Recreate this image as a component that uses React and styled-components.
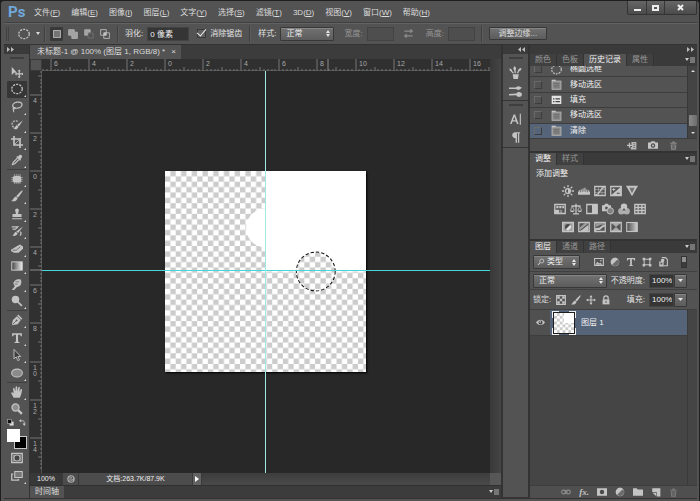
import React from 'react';
import styled, { createGlobalStyle, css } from 'styled-components';

const GlobalStyle = createGlobalStyle`
  * { box-sizing: border-box; }
  body {
    margin: 0;
    background: #1c1c1c;
    color: #dcdcdc;
    font-family: "Liberation Sans", "Noto Sans CJK SC", sans-serif;
    font-size: 8px;
    line-height: 10px;
  }
  button, input, select {
    font: inherit;
    color: inherit;
    margin: 0;
    padding: 0;
    border: 0;
    background: none;
    border-radius: 0;
  }
  ul { list-style: none; margin: 0; padding: 0; }
`;

const bevel = css`
  border: 1px solid #383838;
  border-radius: 1px;
  background: linear-gradient(#727272, #5c5c5c);
  box-shadow: inset 0 1px #858585;
`;

/* ---------- icons ---------- */

const Svg = styled.svg`
  display: block;
  flex: none;
  width: ${p => p.$size || 12}px;
  height: ${p => p.$size || 12}px;
  color: ${p => p.$color || '#c4c4c4'};
  fill: currentColor;
  stroke: none;
`;

const line = { fill: 'none', stroke: 'currentColor', strokeWidth: 1.7 };

const shapes = {
  move: <><path d="M1 1v11l3-3h4z" /><path d="M11 6v9M6.500 10.500h9" {...line} /><path d="M11 4.500l2 2.500H9zM11 16.500l2-2.500H9zM5 10.500l2.500-2v4zM17 10.500l-2.500-2v4z" /></>,
  marquee: <ellipse cx="8" cy="8" rx="7" ry="6.300" {...line} strokeDasharray="2.800 1.400" />,
  lasso: <><ellipse cx="8.500" cy="5.500" rx="6.300" ry="4" {...line} transform="rotate(-12 8.500 5.500)" /><path d="M3.500 8c-2 2 1 3.500 2 2s-2-2-2.500 0 1 3 .5 5" {...line} strokeWidth="1.400" /></>,
  quick: <><path d="M9 3C4 1 0 5 2 9s5 4 6 4" {...line} strokeDasharray="2.500 1.500" /><path d="M16 1.500L10.500 10 8 8zM7.500 8l2.500 2.500c-1.500 3.500-4 3.500-7 2.500 2-.5 2.500-3 4.500-5z" /></>,
  crop: <><path d="M4 0v12h12M0 4h12v12" {...line} strokeWidth="2.200" /><path d="M4 12L14 2" {...line} strokeWidth="1" /></>,
  dropper: <><path d="M10 2.500c2-3 6-.5 4.500 2L12.500 6.500l1 1-1.500 1.500-5-5L8.500 2.500l1 1z" /><path d="M8.500 5.500L3 11l-1 3 3-1 5.500-5.500" {...line} /></>,
  heal: <><rect x="2.500" y="4" width="11" height="8.500" rx="2.500" /><path d="M4.500 1.500v13M7 1.500v13M9.500 1.500v13M12 1.500v13M.5 6h15M.5 8.500h15M.5 11h15" stroke="currentColor" strokeWidth=".9" /></>,
  brush: <path d="M15.500.5c1 .7-4.600 8.200-6.200 9.800L7 8.300C8.500 6.500 14.500 0 15.500.5zM6.500 8.700l2.300 2.300c-1.500 4.200-4.800 4.700-8.800 3.700 3-.7 3-4.700 6.500-6z" />,
  stamp: <path d="M5.500 3a2.500 2.500 0 115 0c0 2-1 2-1 5H14v4H2V8h4.500c0-3-1-3-1-5zM1.500 13.500h13V15h-13z" />,
  history: <><path d="M16 2L9.500 10.500 7 8.500zM6.500 9l2.300 2.300c-1.500 3.500-4.300 3.700-7 2.700 2.200-.5 2.200-4 4.700-5z" /><path d="M1 2.500h8l-3 3H2M12 9c2 1 2 3 0 5" {...line} /></>,
  eraser: <><path d="M6.500 5L12 2l4 2.500v3L10 13H4L0 10.500V9z" /><path d="M2 9.500h5L12.500 5" stroke="#555" fill="none" /></>,
  gradient: <><defs><linearGradient id="tg"><stop stopColor="#444" /><stop offset="1" stopColor="#eee" /></linearGradient></defs><rect x="1" y="2.500" width="14" height="11" fill="url(#tg)" stroke="#ccc" strokeWidth="1.300" /></>,
  smudge: <><path d="M3 7c2-5 5-6 10-5 1.500 3 1 7-2 9l-3 1-4 4H1l4-5z" /><path d="M5 8h4M6 5h5" stroke="#666" /></>,
  dodge: <><circle cx="6" cy="6" r="5" /><path d="M9 9l5.500 5.500" {...line} strokeWidth="2.300" /></>,
  pen: <><path d="M1 15l1.500-7L8 3l5 5-4 5.500z" /><path d="M9 1.500L14.500 7" {...line} strokeWidth="2" /><path d="M2 14l5-5" stroke="#555" /><circle cx="7.500" cy="8.500" r="1.200" fill="#555" /></>,
  type: <path d="M1.500 1.500h13v4h-1.500L12.200 3.500H9.400v9.200l1.900.8v1H4.700v-1l1.900-.8V3.500H3.800L3 5.500H1.500z" />,
  arrow: <path d="M4 .5v12.500l3-2.500 2 5 2.300-1-2.200-4.500H13z" fill="#3c3c3c" stroke="#c4c4c4" strokeWidth="1.200" />,
  ellipse: <ellipse cx="8" cy="8" rx="7.200" ry="5.200" fill="#8a8a8a" stroke="#c4c4c4" strokeWidth="1.400" />,
  hand: <path d="M3.500 15.500L.3 9.500c0-1.700 1.700-1.700 3.200.2L2.800 3.500c0-1.500 1.700-1.500 2 0L6 7l.1-5.700c.2-1.500 2-1.500 2.200 0L8.700 7l1.100-5c.4-1.400 2.100-1 2 .5L11.300 8l1.500-3.200c.7-1.300 2.300-.8 2 .5-1 5-1.500 7.200-3 10.200z" />,
  zoom: <><circle cx="6" cy="6" r="4.700" fill="#8e8e8e" stroke="#c4c4c4" strokeWidth="1.700" /><path d="M9.500 9.500l5 5" {...line} strokeWidth="3" /></>,
  defaults: <><rect x="6" y="6" width="9" height="9" fill="#ddd" /><rect x="1" y="1" width="9" height="9" fill="#111" stroke="#aaa" strokeWidth="1.500" /></>,
  swapColors: <><path d="M4 4h5q3 0 3 3v4" {...line} strokeWidth="1.800" /><path d="M5 0v8L0 4zM8 10.500h8L12 16z" /></>,
  quickMask: <><path d="M1 2h14v12H1z" {...line} /><path d="M3 4h10v8H3z" fill="#a6a6a6" /><circle cx="8" cy="8" r="4" fill="#444" stroke="#ccc" /></>,
  screen: <><rect x="5" y="2" width="10" height="8" fill="#777" stroke="#c4c4c4" strokeWidth="1.400" /><path d="M3 5.500H1v8h9v-2" {...line} /></>,
  selNew: <rect x="2.500" y="2.500" width="11" height="11" fill="#747474" stroke="#b5b5b5" strokeWidth="1.500" />,
  selAdd: <path d="M1 1h9v4h5v10H6v-5H1z" fill="#a3a3a3" stroke="#c4c4c4" />,
  selSub: <><path d="M1 1h9v4H5.500v5H1z" fill="#a3a3a3" stroke="#bbb" /><path d="M6.500 6.500h8v8h-8z" {...line} strokeWidth="1" strokeDasharray="2 1" opacity=".6" /></>,
  selInt: <><path d="M1 1h9v9H1zM6 6h9v9H6z" {...line} strokeWidth="1.300" /><path d="M6 6h4v4H6z" /></>,
  swap: <><path d="M2 4.500h10M4 11.500h10" {...line} /><path d="M10.500 1L15 4.500 10.500 8zM5.500 8L1 11.500 5.500 15z" /></>,
  brushes: <path d="M4.500 10h7.500l-1 6H5.500zM7 9L6.300 5C5 4 5 2 7 0c2 2 2 4 1.200 5l.3 4zM4.300 9L2.200 6.500C1 6 .5 4.500.5 3c2 .3 3.300 1.300 3.500 3.200L6.300 9zM9.500 9l1.700-3.500C11.300 4 13 2.500 15.200 2.500c0 2-.8 3.700-2.700 4L11.300 9z" />,
  brushPresets: <><path d="M0 3h8L10 2c2-1.300 3.500 0 6 1.500C13.500 5.500 12 6.800 10 5.500L8 5H0zM0 11l9-.5c1-3 7-2.500 7 1.200s-6 4-7 1L0 12.800z" /></>,
  character: <path d="M0 14.500L4.800 2h2L11.500 14.500H9.300L8 11.200H3.400L2.100 14.500zm4.100-5h3.300L5.700 4.700zM13 1h1.500v14.500H13z" />,
  paragraph: <path d="M7 1.500h6.500v1.600h-1.200V15.500h-1.700V3.100H9.300v12.400H7.500v-6C1.500 9.500 1.500 1.500 7 1.500z" />,
  doc: <><rect x="1.500" y="3" width="13" height="12" fill="#8a8a8a" stroke="#b8b8b8" strokeWidth="1.200" /><path d="M1 1h6v2H1z" /><path d="M4 6.500h8M4 9h8M4 11.500h8" stroke="#626262" /></>,
  fillState: <><path d="M1 2.500h14v12H1z" fill="#e4e4e4" /><path d="M3 7h2M3 11h2M6.500 7H13M6.500 11H13" stroke="#444" strokeWidth="1.800" /></>,
  newDoc: <><path d="M7 3h8v12H6v-4h2V7H7z" fill="#b8b8b8" /><path d="M4 4.500v8M0 8.500h8" {...line} strokeWidth="2" /><path d="M10 6h3M10 9h3M10 12h3" stroke="#555" /></>,
  camera: <><path d="M0 4h4l1.500-2h5L12 4h4v10H0z" /><circle cx="8" cy="8.800" r="3.500" fill="#4a4a4a" /><circle cx="8" cy="8.800" r="1.700" /></>,
  trash: <><path d="M2 3h12v1.800H2zM6 1h4v2H6zM3 6h10l-.8 9.500H3.800z" /><path d="M6 7v7M8 7v7M10 7v7" stroke="#4d4d4d" /></>,
  sun: <><circle cx="8" cy="8" r="3.300" {...line} /><path d="M8 5a3 3 0 010 6z" /><path d="M8 0v3M8 13v3M0 8h3M13 8h3M2.300 2.300l2.200 2.200M11.500 11.500l2.200 2.200M13.700 2.300l-2.200 2.200M4.500 11.500l-2.200 2.200" {...line} /></>,
  levels: <path d="M0 13V9h1V7h1.500v2.500h1V6H5v3h1V4.500h1.500V9h1V3.500H10V9h1V6h1.500v3.500h1V7H15v2h1v4z" />,
  curves: <><path d="M1 2h14v12H1z" {...line} /><path d="M1 6h14M1 10h14M6 2v12M10.500 2v12" stroke="currentColor" strokeWidth=".6" /><path d="M2 13c7 0 6-10 12-10" {...line} strokeWidth="1.800" /></>,
  exposure: <><path d="M1 2h14v12H1z" {...line} /><path d="M1 14L15 2v12z" /><path d="M3 6h4M5 4v4" {...line} strokeWidth="1.200" /><path d="M9 11h4" stroke="#444" strokeWidth="1.300" /></>,
  vibrance: <><path d="M0 1h16L8 15z" /><path d="M4.500 3.500h7L8 11z" fill="#707070" /></>,
  hue: <><path d="M1 2h14v12H1z" {...line} /><path d="M3 4h3v3H3zM7 4h3v3H7zM11 4h2.500v3H11z" /><path d="M1 9h6v5H1z" /><path d="M8 9h3v5H8z" opacity=".5" /></>,
  balance: <><path d="M8 1v13M2 4h12M4 14.500h8" {...line} /><path d="M3 4L.5 10M3 4l2.500 6M13 4l-2.500 6M13 4l2.500 6" {...line} strokeWidth="1" /><path d="M0 10h6c-.5 3-5.500 3-6 0zM10 10h6c-.5 3-5.500 3-6 0z" /></>,
  bw: <><path d="M1 2h14v12H1z" {...line} /><path d="M8 2h7v12H8z" /></>,
  photo: <><path d="M0 3h3l1-2h4l1 2h3v8H0z" /><circle cx="6" cy="6.500" r="2" fill="#555" /><circle cx="11" cy="10.500" r="4.300" fill="#808080" stroke="#c4c4c4" strokeWidth="1.200" /></>,
  mixer: <><circle cx="8" cy="5" r="4.300" /><circle cx="4.500" cy="11" r="4.300" opacity=".8" /><circle cx="11.500" cy="11" r="4.300" opacity=".8" /><path d="M8 6.500l2 3.500H6z" fill="#4a4a4a" /></>,
  lookup: <path d="M1 2h14v12H1zM1 6h14M1 10h14M5.500 2v12M10.500 2v12" {...line} />,
  invert: <><path d="M1 2h14v12H1z" fill="#9c9c9c" stroke="currentColor" strokeWidth="2" /><circle cx="8" cy="8" r="4" fill="#484848" /><path d="M5 11l6-6a4.200 4.200 0 01-6 6z" fill="#ddd" /></>,
  posterize: <><path d="M1 2h14v12H1z" {...line} /><path d="M2 9L9 3h5L3 12z" opacity=".65" /><path d="M3 13.500L14 5v8z" /></>,
  threshold: <><path d="M1 2h14v12H1z" {...line} /><path d="M1 14v-4l4-1 2 0 4-3 4-1v2l-4 2-3 3H4z" /><path d="M2 3h12v2H9L3 8z" opacity=".6" /></>,
  selective: <><path d="M1 2h14v12H1z" {...line} /><path d="M1 2h14L8 8zM1 14h14L8 8z" opacity=".75" /></>,
  gradMap: <><defs><linearGradient id="gm"><stop stopColor="#4a4a4a" /><stop offset="1" stopColor="#cfcfcf" /></linearGradient></defs><rect x="1" y="2" width="14" height="12" fill="url(#gm)" stroke="#c4c4c4" strokeWidth="1.500" /></>,
  search: <><circle cx="9.500" cy="6" r="4" {...line} /><path d="M6.500 9L2 14" {...line} strokeWidth="2.200" /></>,
  image: <><path d="M1 2.500h14v11H1z" {...line} /><path d="M2 12.500l3.500-5 2.500 3 2-1.500 4 3.500z" /><circle cx="11" cy="6" r="1.300" /></>,
  adjust: <><circle cx="8" cy="8" r="6" {...line} /><path d="M3.500 12.500l9-9a6.300 6.300 0 01-9 9z" fill="#6c6c6c" /><path d="M3.500 12.500l9-9a6.300 6.300 0 00-9 9z" /></>,
  shape: <><path d="M3.500 3.500h9v9h-9z" {...line} /><path d="M1 1h4v4H1zM11 1h4v4h-4zM1 11h4v4H1zM11 11h4v4h-4z" /></>,
  smart: <><path d="M6 1h6l3 3v10H9" {...line} /><path d="M2 7h7v8H2zM5 3h5v4H5z" /><path d="M4 9h3v3H4z" fill="#555" /></>,
  checker: <><path d="M1 1h14v14H1z" {...line} /><path d="M2 2h4v4H2zM10 2h4v4h-4zM6 6h4v4H6zM2 10h4v4H2zM10 10h4v4h-4z" /></>,
  arrows: <><path d="M8 2v12M2 8h12" {...line} /><path d="M8 0l2.500 3.500h-5zM8 16l2.500-3.500h-5zM0 8l3.500-2.500v5zM16 8l-3.500-2.500v5z" /></>,
  lock: <><path d="M4.500 7V5a3.500 3.500 0 017 0v2" {...line} strokeWidth="2" /><path d="M2.500 7h11v8h-11z" /><path d="M8 9.500v3" stroke="#444" strokeWidth="1.500" /></>,
  eye: <><path d="M0 8c4-6.500 12-6.500 16 0-4 6-12 6-16 0z" /><circle cx="8" cy="8" r="3.500" fill="#444" /><circle cx="7.500" cy="7" r="1.500" /></>,
  link: <><rect x="1" y="5" width="7" height="6" rx="3" {...line} /><rect x="8" y="5" width="7" height="6" rx="3" {...line} /><path d="M5 8h6" {...line} /></>,
  mask: <><path d="M0 2h16v12H0z" /><circle cx="8" cy="8" r="3.500" fill="#4a4a4a" /></>,
  folder: <path d="M0 2h6l1.500 2H16v10H0z" />,
  newLayer: <><path d="M2 2h13v13H9L2 9z" /><path d="M1 8h8v8H1z" fill="#505050" /><path d="M2.500 9H8v5.500z" /></>,
  disk: <><circle cx="8" cy="8" r="7.500" fill="#a8a8a8" /><path d="M12 5c-3-3-8-1-8 3s5 6 8 3M6 8h5V5" stroke="#4b4b4b" strokeWidth="1.800" fill="none" /></>,
};

const Icon = ({ name, size, color }) => (
  <Svg viewBox="0 0 16 16" $size={size} $color={color} aria-hidden="true">{shapes[name]}</Svg>
);

/* ---------- frame ---------- */

const Window = styled.div`
  display: flex;
  flex-direction: column;
  min-height: 100vh;
  padding: 0 2px 2px 3px;
  border: 1px solid #1f1f1f;
  border-width: 1px 1px 0;
  border-radius: 4px 4px 0 0;
  background: #535353;
`;

const TopBar = styled.header`
  display: flex;
  align-items: center;
  height: 21px;
  padding-left: 4px;
`;

const Logo = styled.span`
  width: 26px;
  color: #6fa8dc;
  font: bold 15px/18px Roboto, sans-serif;
`;

const Menu = styled.nav`
  display: flex;
  flex: 1;
  gap: 11px;
  padding-top: 2px;
`;

const MenuButton = styled.button`
  white-space: nowrap;
`;

const WindowButtons = styled.div`
  display: flex;
  align-self: flex-start;
  border: 1px solid #333;
  border-top: 0;
  border-radius: 0 0 2px 2px;
`;

const WindowButton = styled.button`
  display: grid;
  place-items: center;
  width: ${p => (p.$wide ? 32 : 18)}px;
  height: 13px;
  background: linear-gradient(#666, #4b4b4b);
  border-left: ${p => (p.$first ? 0 : '1px solid #363636')};
`;

const Options = styled.div`
  display: flex;
  align-items: center;
  height: 22px;
  border-top: 1px solid #404040;
  box-shadow: inset 0 1px #626262;
  white-space: nowrap;
`;

const Grip = styled.span`
  flex: none;
  width: 3px;
  height: 14px;
  margin: 0 9px 0 2px;
  border: solid #424242;
  border-width: 0 1px;
`;

const Rule = styled.span`
  flex: none;
  width: 2px;
  height: 16px;
  margin: 0 ${p => p.$gap || 6}px;
  border-left: 1px solid #3f3f3f;
  border-right: 1px solid #5d5d5d;
`;

const PlainButton = styled.button`
  display: flex;
  align-items: center;
  gap: 6px;
`;

const Modes = styled.div`
  display: flex;
  gap: 3px;
`;

const ModeButton = styled.button`
  display: grid;
  place-items: center;
  width: 13px;
  height: 14px;
  border-radius: 1px;
  background: ${p => (p.$on ? '#393939' : 'none')};
`;

const Field = styled.label`
  display: flex;
  align-items: center;
  gap: 4px;
  margin-right: ${p => p.$after || 0}px;
  color: ${p => (p.$dim ? '#969696' : '#e4e4e4')};
`;

const TextBox = styled.input`
  width: ${p => p.$w}px;
  height: 14px;
  padding: 0 2px;
  border: 1px solid #434343;
  background: ${p => (p.disabled ? '#4e4e4e' : '#353535')};
  color: #f0f0f0;
`;

const Check = styled.input`
  appearance: none;
  display: grid;
  place-items: center;
  width: 9px;
  height: 9px;
  border: 1px solid #393939;
  background: #606060;
  &:checked::after {
    content: "";
    width: 4px;
    height: 8px;
    margin-top: -4px;
    border: solid #eee;
    border-width: 0 1px 1px 0;
    transform: rotate(40deg);
  }
`;

const Picker = styled.span`
  ${bevel}
  display: flex;
  align-items: center;
  width: ${p => p.$w}px;
  height: 14px;
  padding: 0 3px;
`;

const NativeSelect = styled.select`
  appearance: none;
  flex: 1;
  min-width: 0;
  padding-left: 2px;
  outline: 0;
  color: #f0f0f0;
`;

const SelectBox = ({ w, value, label, icon }) => (
  <Picker $w={w}>
    {icon && <Icon name={icon} size={8} />}
    <NativeSelect aria-label={label} defaultValue={value}>
      <option>{value}</option>
    </NativeSelect>
    <svg width="4" height="7" viewBox="0 0 4 7"><path d="M0 3l2-3 2 3zM0 4h4L2 7z" fill="#e6e6e6" /></svg>
  </Picker>
);

const TextButton = styled.button`
  ${bevel}
  width: 58px;
  height: 13px;
  line-height: 10px;
`;

const SwapButton = styled(PlainButton)`
  margin-right: 12px;
`;

const Main = styled.main`
  display: flex;
  flex: 1;
  min-height: 0;
  border: 1px solid #333;
  border-width: 1px 0;
  background: #333;
`;

const StripHead = styled.div`
  flex: none;
  display: flex;
  align-items: center;
  justify-content: ${p => (p.$right ? 'flex-end' : 'flex-start')};
  height: 9px;
  padding: 0 3px;
  background: #3a3a3a;
`;

const Chevrons = ({ left }) => (
  <svg width="7" height="5" viewBox="0 0 7 5">
    <path d={left ? 'M3 0v5L0 2.500zM7 0v5L4 2.500z' : 'M0 0v5l3-2.500zM4 0v5l3-2.500z'} fill="#bdbdbd" />
  </svg>
);

/* ---------- toolbox ---------- */

const Toolbox = styled.aside`
  display: flex;
  flex-direction: column;
  width: 25px;
`;

const ToolColumn = styled.div`
  display: flex;
  flex: 1;
  flex-direction: column;
  align-items: center;
  background: #535353;
`;

const Handle = styled.span`
  width: 14px;
  height: 2px;
  margin: 3px 0 ${p => p.$after || 4}px;
  background: #3e3e3e;
`;

const ToolGroup = styled.div`
  display: grid;
  grid-auto-rows: 1fr;
  width: 20px;
  height: ${p => p.$h}px;
  & + & { border-top: 1px solid #3f3f3f; }
`;

const ToolButton = styled.button`
  position: relative;
  display: grid;
  place-items: center;
  border-radius: 1px;
  background: ${p => (p.$on ? '#363636' : 'none')};
  &::after {
    content: "";
    position: absolute;
    right: 1px;
    bottom: 1px;
    border: 1px solid #ddd;
    border-top-color: transparent;
    border-left-color: transparent;
    display: ${p => (p.$solo ? 'none' : 'block')};
  }
`;

const Pair = styled.div`
  display: flex;
  justify-content: space-between;
  width: 19px;
  margin: 1px 0 3px;
`;

const Swatches = styled.div`
  display: grid;
  width: 20px;
  height: 20px;
`;

const Swatch = styled.button`
  grid-area: 1 / 1;
  width: 13px;
  height: 13px;
  align-self: ${p => (p.$back ? 'end' : 'start')};
  justify-self: ${p => (p.$back ? 'end' : 'start')};
  background: ${p => (p.$back ? '#000' : '#fff')};
  border: 1px solid ${p => (p.$back ? '#c9c9c9' : '#fff')};
`;

const ExtraTool = styled(ToolButton)`
  width: 20px;
  height: 18px;
`;

const groups = [
  { h: 106, tools: ['move', 'marquee', 'lasso', 'quick', 'crop', 'dropper'] },
  { h: 141, tools: ['heal', 'brush', 'stamp', 'history', 'eraser', 'gradient', 'smudge', 'dodge'] },
  { h: 72, tools: ['pen', 'type', 'arrow', 'ellipse'] },
  { h: 36, tools: ['hand', 'zoom'] },
];

const Tools = () => (
  <Toolbox>
    <StripHead><Chevrons /></StripHead>
    <ToolColumn>
      <Handle />
      {groups.map(g => (
        <ToolGroup key={g.h} $h={g.h}>
          {g.tools.map(t => (
            <ToolButton key={t} aria-label={t} $on={t === 'marquee'} $solo={t === 'move' || t === 'zoom'}>
              <Icon name={t} />
            </ToolButton>
          ))}
        </ToolGroup>
      ))}
      <Pair><Icon name="defaults" size={7} /><Icon name="swapColors" size={7} /></Pair>
      <Swatches>
        <Swatch $back aria-label="背景色" />
        <Swatch aria-label="前景色" />
      </Swatches>
      <ExtraTool $solo aria-label="快速蒙版"><Icon name="quickMask" /></ExtraTool>
      <ExtraTool aria-label="屏幕模式"><Icon name="screen" /></ExtraTool>
    </ToolColumn>
  </Toolbox>
);

/* ---------- document ---------- */

const DocColumn = styled.section`
  display: flex;
  flex: 1;
  flex-direction: column;
  min-width: 0;
  margin: 0 1px;
`;

const DocTabs = styled.div`
  display: flex;
  height: 14px;
  background: #3c3c3c;
`;

const DocTab = styled.button`
  display: flex;
  align-items: center;
  gap: 6px;
  padding: 0 5px 0 7px;
  background: #535353;
  white-space: nowrap;
`;

const Workspace = styled.div`
  display: grid;
  flex: 1;
  grid-template: 12px minmax(0, 1fr) / 12px minmax(0, 1fr) 11px;
`;

const Corner = styled.div`
  background: #535353;
  border: 1px solid #3a3a3a;
`;

const RulerSvg = styled.svg`
  display: block;
  width: 100%;
  height: 100%;
  background: #303030;
  overflow: hidden;
  stroke: #747474;
  text {
    stroke: none;
    fill: #a8a8a8;
    font-size: 7px;
  }
`;

const Track = styled.div`
  grid-row: span 2;
  background: linear-gradient(90deg, #383838, #454545);
`;

const Stage = styled.div`
  position: relative;
  display: flex;
  align-items: center;
  justify-content: center;
  padding: 0 2px 2px 0;
  background: #282828;
  overflow: hidden;
`;

const Artwork = styled.svg`
  flex: none;
  width: 201px;
  height: 201px;
  box-shadow: 1px 1px 2px #000;
`;

const Guide = styled.span`
  position: absolute;
  background: ${p => (p.$vertical ? '#9de9e6' : '#48d6d6')};
  ${p => (p.$vertical
    ? 'top: 0; bottom: 0; left: 50%; width: 1px; margin-left: -1px;'
    : 'left: 0; right: 0; top: 50%; height: 1px; margin-top: -2px;')}
`;

const Status = styled.div`
  display: flex;
  height: 12px;
  background: linear-gradient(#3d3d3d, #4a4a4a);
  font-size: 7px;
`;

const StatusCell = styled.span`
  display: flex;
  align-items: center;
  justify-content: center;
  width: ${p => p.$w}px;
  background: ${p => p.$bg || '#4c4c4c'};
  border-right: 1px solid #3a3a3a;
  white-space: nowrap;
  color: #f0f0f0;
`;

const SizeGrip = styled.span`
  width: 11px;
  margin-left: auto;
  background: #575757;
`;

const Timeline = styled.div`
  display: flex;
  align-items: center;
  justify-content: space-between;
  height: 13px;
  padding-right: 2px;
  border-top: 1px solid #303030;
  background: #3c3c3c;
`;

const TimelineTab = styled.button`
  align-self: stretch;
  padding: 0 5px;
  background: #535353;
`;

// pixels per ruler unit and artwork origin measured from the ruler centre
const UNIT = 19.05;
const ORIGIN = -101;

const Ruler = ({ vertical, mark }) => {
  const ticks = [];
  const first = vertical ? -26 : -32;
  const last = vertical ? 78 : 85;
  for (let i = first; i <= last; i++) {
    const at = Math.round(ORIGIN + (i * UNIT) / 5);
    const len = i % 10 === 0 ? 12 : i % 5 === 0 ? 4 : 2;
    ticks.push(<path key={i} d={vertical ? `M${12 - len} ${at}H12` : `M${at} ${12 - len}V12`} />);
    if (i % 10 === 0) {
      const digits = String(Math.abs(i / 5));
      if (vertical) {
        digits.split('').forEach((d, n) => ticks.push(
          <text key={`${i}-${n}`} x="3" y={at + 8 + n * 6}>{d}</text>
        ));
      } else {
        ticks.push(<text key={`t${i}`} x={at + 3} y="7">{digits}</text>);
      }
    }
  }
  return (
    <RulerSvg>
      <svg x={vertical ? 0 : '50%'} y={vertical ? '50%' : 0} overflow="visible">
        {ticks}
        <path d={vertical ? `M0 ${mark}H12` : `M${mark} 0V12`} stroke="#8a8a8a" />
      </svg>
      <path d={vertical ? 'M12 0V900' : 'M0 12H2000'} />
    </RulerSvg>
  );
};

const Canvas = () => (
  <Artwork viewBox="0 0 300 300">
    <defs>
      <pattern id="alpha" width="16" height="16" patternUnits="userSpaceOnUse">
        <path d="M0 0h16v16H0z" fill="#fff" />
        <path d="M8 0h8v8H8zM0 8h8v8H0z" fill="#ccc" />
      </pattern>
    </defs>
    <path d="M0 0h300v300H0z" fill="url(#alpha)" />
    <path d="M150 0h150v150H150v-36a29 29 0 010-58z" fill="#fff" />
    <circle cx="225" cy="150" r="29" fill="url(#alpha)" stroke="#fff" strokeWidth="1.500" />
    <circle cx="225" cy="150" r="29" fill="none" stroke="#111" strokeWidth="1.500" strokeDasharray="5 3" />
  </Artwork>
);

const MenuMark = () => (
  <svg width="10" height="6" viewBox="0 0 10 6">
    <path d="M0 1h4L2 4z" fill="#ccc" /><path d="M5 0h5v6H5z" fill="#6c6c6c" /><path d="M5 1h5M5 3h5M5 5h5" stroke="#808080" />
  </svg>
);

const DocumentView = () => (
  <DocColumn>
    <DocTabs>
      <DocTab>未标题-1 @ 100% (图层 1, RGB/8) * <span>×</span></DocTab>
    </DocTabs>
    <Workspace>
      <Corner />
      <Ruler mark={62} />
      <Track />
      <Ruler vertical mark={-2} />
      <Stage>
        <Canvas />
        <Guide />
        <Guide $vertical />
      </Stage>
    </Workspace>
    <Status>
      <StatusCell $w={33} $bg="#383838">100%</StatusCell>
      <StatusCell $w={16}><Icon name="disk" size={8} /></StatusCell>
      <StatusCell $w={114}>文档:263.7K/87.9K</StatusCell>
      <StatusCell $w={9} $bg="#626262">
        <svg width="4" height="6" viewBox="0 0 4 6"><path d="M0 0l4 3-4 3z" fill="#fff" /></svg>
      </StatusCell>
      <SizeGrip />
    </Status>
    <Timeline><TimelineTab>时间轴</TimelineTab><MenuMark /></Timeline>
  </DocColumn>
);

/* ---------- right side ---------- */

const Dock = styled.aside`
  display: flex;
  flex-direction: column;
  width: 25px;
  margin: 0 2px 0 1px;
`;

const DockGroup = styled.div`
  display: flex;
  flex-direction: column;
  align-items: center;
  gap: 6px;
  height: ${p => (p.$fill ? 'auto' : '47px')};
  flex: ${p => (p.$fill ? 1 : 'none')};
  border-bottom: 1px solid #353535;
  background: #535353;
`;

const Panels = styled.aside`
  display: flex;
  flex-direction: column;
  width: 167px;
`;

const Panel = styled.section`
  display: flex;
  flex-direction: column;
  flex: ${p => (p.$fill ? 1 : 'none')};
  margin-bottom: ${p => (p.$fill ? 0 : 2)}px;
  background: #535353;
`;

const TabBar = styled.div`
  display: flex;
  align-items: center;
  height: 12px;
  padding-right: 2px;
  background: #3a3a3a;
  svg { margin-left: auto; }
`;

const Tab = styled.button`
  height: 100%;
  padding: 0 5px;
  background: ${p => (p.$on ? '#535353' : '#404040')};
  color: ${p => (p.$on ? '#f0f0f0' : '#989898')};
  border-right: 1px solid #333;
`;

const Tabs = ({ items, active }) => (
  <TabBar>
    {items.map(t => <Tab key={t} $on={t === active}>{t}</Tab>)}
    <MenuMark />
  </TabBar>
);

const HistoryBody = styled.div`
  display: flex;
  height: 72px;
  overflow: hidden;
`;

const HistoryList = styled.ul`
  display: grid;
  flex: 1;
  align-self: flex-end;
  grid-auto-rows: 1fr;
  height: 77px;
`;

const HistoryRow = styled.li`
  display: flex;
  align-items: center;
  padding-left: 4px;
  border-top: 1px solid #3d3d3d;
  background: ${p => (p.$on ? '#566479' : '#535353')};
  color: #f0f0f0;
  svg { margin: 0 8px 0 9px; }
`;

const StateBox = styled.span`
  width: 8px;
  height: 8px;
  border: 1px solid;
  border-color: #6a6a6a #3c3c3c #3c3c3c #6a6a6a;
`;

const ScrollBar = styled.div`
  display: flex;
  flex-direction: column;
  align-items: center;
  width: 10px;
  padding: 4px 0;
  border-left: 1px solid #383838;
  background: #444;
`;

const Thumb = styled.span`
  width: 8px;
  height: 11px;
  margin: auto 0 6px;
  border-radius: 1px;
  background: linear-gradient(90deg, #8a8a8a, #6c6c6c);
`;

const Footer = styled.footer`
  display: flex;
  align-items: center;
  justify-content: flex-end;
  gap: ${p => p.$gap}px;
  height: 13px;
  padding-right: ${p => p.$end}px;
  border-top: 1px solid #3d3d3d;
  background: #4f4f4f;
`;

const AdjustBody = styled.div`
  display: flex;
  flex-direction: column;
  gap: 6px;
  height: 74px;
  padding: 4px 27px 0 0;
`;

const AdjustTitle = styled.div`
  padding-left: 6px;
  color: #eee;
`;

const IconRow = styled.div`
  display: flex;
  justify-content: center;
  gap: 4px;
`;

const adjustments = [
  ['sun', 'levels', 'curves', 'exposure', 'vibrance'],
  ['hue', 'balance', 'bw', 'photo', 'mixer', 'lookup'],
  ['invert', 'posterize', 'threshold', 'selective', 'gradMap'],
];

const LayerOptions = styled.div`
  display: flex;
  align-items: center;
  justify-content: space-between;
  height: ${p => p.$h}px;
  padding: 0 10px 0 3px;
  border-bottom: 1px solid #404040;
  white-space: nowrap;
`;

const Icons = styled.div`
  display: flex;
  align-items: center;
  gap: ${p => p.$gap}px;
`;

const Toggle = styled.button`
  width: 6px;
  height: 12px;
  border: 1px solid #333;
  background: linear-gradient(#909090 50%, #3c3c3c 50%);
`;

const Percent = styled.span`
  display: flex;
  input { width: 25px; padding: 0 1px 0 2px; }
`;

const DropButton = styled.button`
  ${bevel}
  display: grid;
  place-items: center;
  width: 13px;
  height: 14px;
`;

const PercentField = ({ label }) => (
  <Field>
    {label}
    <Percent>
      <TextBox defaultValue="100%" />
      <DropButton aria-label={label}>
        <svg width="5" height="3" viewBox="0 0 5 3"><path d="M0 0h5L2.500 3z" fill="#e4e4e4" /></svg>
      </DropButton>
    </Percent>
  </Field>
);

const LayerArea = styled.div`
  display: flex;
  flex: 1;
  background: #454545;
`;

const LayerList = styled.ul`
  flex: 1;
  border-right: 1px solid #3a3a3a;
`;

const LayerRow = styled.li`
  display: flex;
  align-items: center;
  height: 26px;
  background: #566479;
  border-bottom: 1px solid #3d3d3d;
  color: #f0f0f0;
`;

const EyeCell = styled.button`
  display: grid;
  place-items: center;
  align-self: stretch;
  width: 20px;
  background: #505050;
`;

const Gutter = styled.div`
  width: 9px;
`;

const LayerThumb = styled.svg`
  display: block;
  width: 24px;
  height: 24px;
  margin: 0 5px 0 2px;
`;

const Fx = styled.span`
  color: #c4c4c4;
  font: italic bold 9px/10px "Liberation Serif", serif;
`;

const history = [
  ['marquee', '椭圆选框'],
  ['doc', '移动选区'],
  ['fillState', '填充'],
  ['doc', '移动选区'],
  ['doc', '清除'],
];

const SidePanels = () => (
  <Panels>
    <StripHead $right><Chevrons /></StripHead>
    <Panel>
      <Tabs items={['颜色', '色板', '历史记录', '属性']} active="历史记录" />
      <HistoryBody>
        <HistoryList>
          {history.map(([icon, name], i) => (
            <HistoryRow key={i} $on={i === 4}>
              <StateBox />
              <Icon name={icon} size={11} />
              {name}
            </HistoryRow>
          ))}
        </HistoryList>
        <ScrollBar>
          <svg width="4" height="2" viewBox="0 0 4 2"><path d="M0 2l2-2 2 2z" fill="#ddd" /></svg>
          <Thumb />
          <svg width="4" height="2" viewBox="0 0 4 2"><path d="M0 0h4L2 2z" fill="#ddd" /></svg>
        </ScrollBar>
      </HistoryBody>
      <Footer $gap={11} $end={19}>
        <Icon name="newDoc" size={10} />
        <Icon name="camera" size={10} />
        <Icon name="trash" size={9} color="#8c8c8c" />
      </Footer>
    </Panel>
    <Panel>
      <Tabs items={['调整', '样式']} active="调整" />
      <AdjustBody>
        <AdjustTitle>添加调整</AdjustTitle>
        {adjustments.map(row => (
          <IconRow key={row[0]}>
            {row.map(n => <PlainButton key={n} aria-label={n}><Icon name={n} /></PlainButton>)}
          </IconRow>
        ))}
      </AdjustBody>
    </Panel>
    <Panel $fill>
      <Tabs items={['图层', '通道', '路径']} active="图层" />
      <LayerOptions $h={19}>
        <SelectBox w={47} value="类型" label="类型" icon="search" />
        <Icons $gap={6}>
          {['image', 'adjust', 'type', 'shape', 'smart'].map(n => <Icon key={n} name={n} size={10} />)}
        </Icons>
        <Toggle aria-label="过滤开关" />
      </LayerOptions>
      <LayerOptions $h={18}>
        <SelectBox w={74} value="正常" label="混合模式" />
        <PercentField label="不透明度:" />
      </LayerOptions>
      <LayerOptions $h={20}>
        <Icons $gap={5}>
          锁定:
          {['checker', 'brush', 'arrows', 'lock'].map(n => <Icon key={n} name={n} size={10} />)}
        </Icons>
        <PercentField label="填充:" />
      </LayerOptions>
      <LayerArea>
        <LayerList>
          <LayerRow>
            <EyeCell aria-label="可见"><Icon name="eye" size={9} /></EyeCell>
            <LayerThumb viewBox="0 0 24 24">
              <path d="M0 0h24v24H0z" fill="#eee" />
              <path d="M7 0h10v24H7zM0 7h24v10H0z" fill="#566479" />
              <path d="M1 1h22v22H1z" fill="#1d1d1d" />
              <svg x="2" y="2" width="20" height="20" viewBox="0 0 56 56">
                <path d="M0 0h56v56H0z" fill="url(#alpha)" />
                <path d="M28 0h28v28H28z" fill="#fff" />
              </svg>
            </LayerThumb>
            图层 1
          </LayerRow>
        </LayerList>
        <Gutter />
      </LayerArea>
      <Footer $gap={8} $end={19}>
        <Icon name="link" size={10} color="#8c8c8c" />
        <Fx>fx.</Fx>
        <Icon name="mask" size={10} />
        <Icon name="adjust" size={10} />
        <Icon name="folder" size={10} />
        <Icon name="newLayer" size={10} />
        <Icon name="trash" size={9} color="#7c7c7c" />
      </Footer>
    </Panel>
  </Panels>
);

const menus = [
  ['文件', 'F'], ['编辑', 'E'], ['图像', 'I'], ['图层', 'L'], ['文字', 'Y'], ['选择', 'S'],
  ['滤镜', 'T'], ['3D', 'D'], ['视图', 'V'], ['窗口', 'W'], ['帮助', 'H'],
];

export default function App() {
  return (
    <>
      <GlobalStyle />
      <Window>
        <TopBar>
          <Logo>Ps</Logo>
          <Menu>
            {menus.map(([name, key]) => (
              <MenuButton key={name}>{name}(<u>{key}</u>)</MenuButton>
            ))}
          </Menu>
          <WindowButtons>
            <WindowButton $first aria-label="最小化">
              <svg width="7" height="8"><path d="M0 5h7v2H0z" fill="#eee" /></svg>
            </WindowButton>
            <WindowButton aria-label="最大化">
              <svg width="7" height="6"><path d="M1 1h5v4H1z" fill="none" stroke="#eee" strokeWidth="2" /></svg>
            </WindowButton>
            <WindowButton $wide aria-label="关闭">
              <svg width="7" height="7"><path d="M1 1l5 5M6 1L1 6" stroke="#eee" strokeWidth="2" /></svg>
            </WindowButton>
          </WindowButtons>
        </TopBar>
        <Options>
          <Grip />
          <PlainButton aria-label="工具预设">
            <Icon name="marquee" />
            <svg width="4" height="3" viewBox="0 0 4 3"><path d="M0 0h4L2 3z" fill="#ddd" /></svg>
          </PlainButton>
          <Rule $gap={4} />
          <Modes>
            {['selNew', 'selAdd', 'selSub', 'selInt'].map((n, i) => (
              <ModeButton key={n} $on={i === 0} aria-label={n}><Icon name={n} size={10} /></ModeButton>
            ))}
          </Modes>
          <Rule />
          <Field $after={8}>羽化: <TextBox $w={42} defaultValue="0 像素" /></Field>
          <Field><Check type="checkbox" defaultChecked /> 消除锯齿</Field>
          <Rule $gap={7} />
          <Field as="div" $after={10}>样式: <SelectBox w={54} value="正常" label="样式" /></Field>
          <Field $dim $after={9}>宽度: <TextBox $w={27} disabled /></Field>
          <SwapButton aria-label="高度和宽度互换"><Icon name="swap" size={11} color="#8b8b8b" /></SwapButton>
          <Field $dim>高度: <TextBox $w={27} disabled /></Field>
          <Rule />
          <TextButton>调整边缘...</TextButton>
        </Options>
        <Main>
          <Tools />
          <DocumentView />
          <Dock>
            <StripHead $right><Chevrons left /></StripHead>
            <DockGroup>
              <Handle $after={1} />
              <Icon name="brushes" size={13} />
              <Icon name="brushPresets" size={13} />
            </DockGroup>
            <DockGroup>
              <Handle $after={1} />
              <Icon name="character" />
              <Icon name="paragraph" />
            </DockGroup>
            <DockGroup $fill />
          </Dock>
          <SidePanels />
        </Main>
      </Window>
    </>
  );
}
